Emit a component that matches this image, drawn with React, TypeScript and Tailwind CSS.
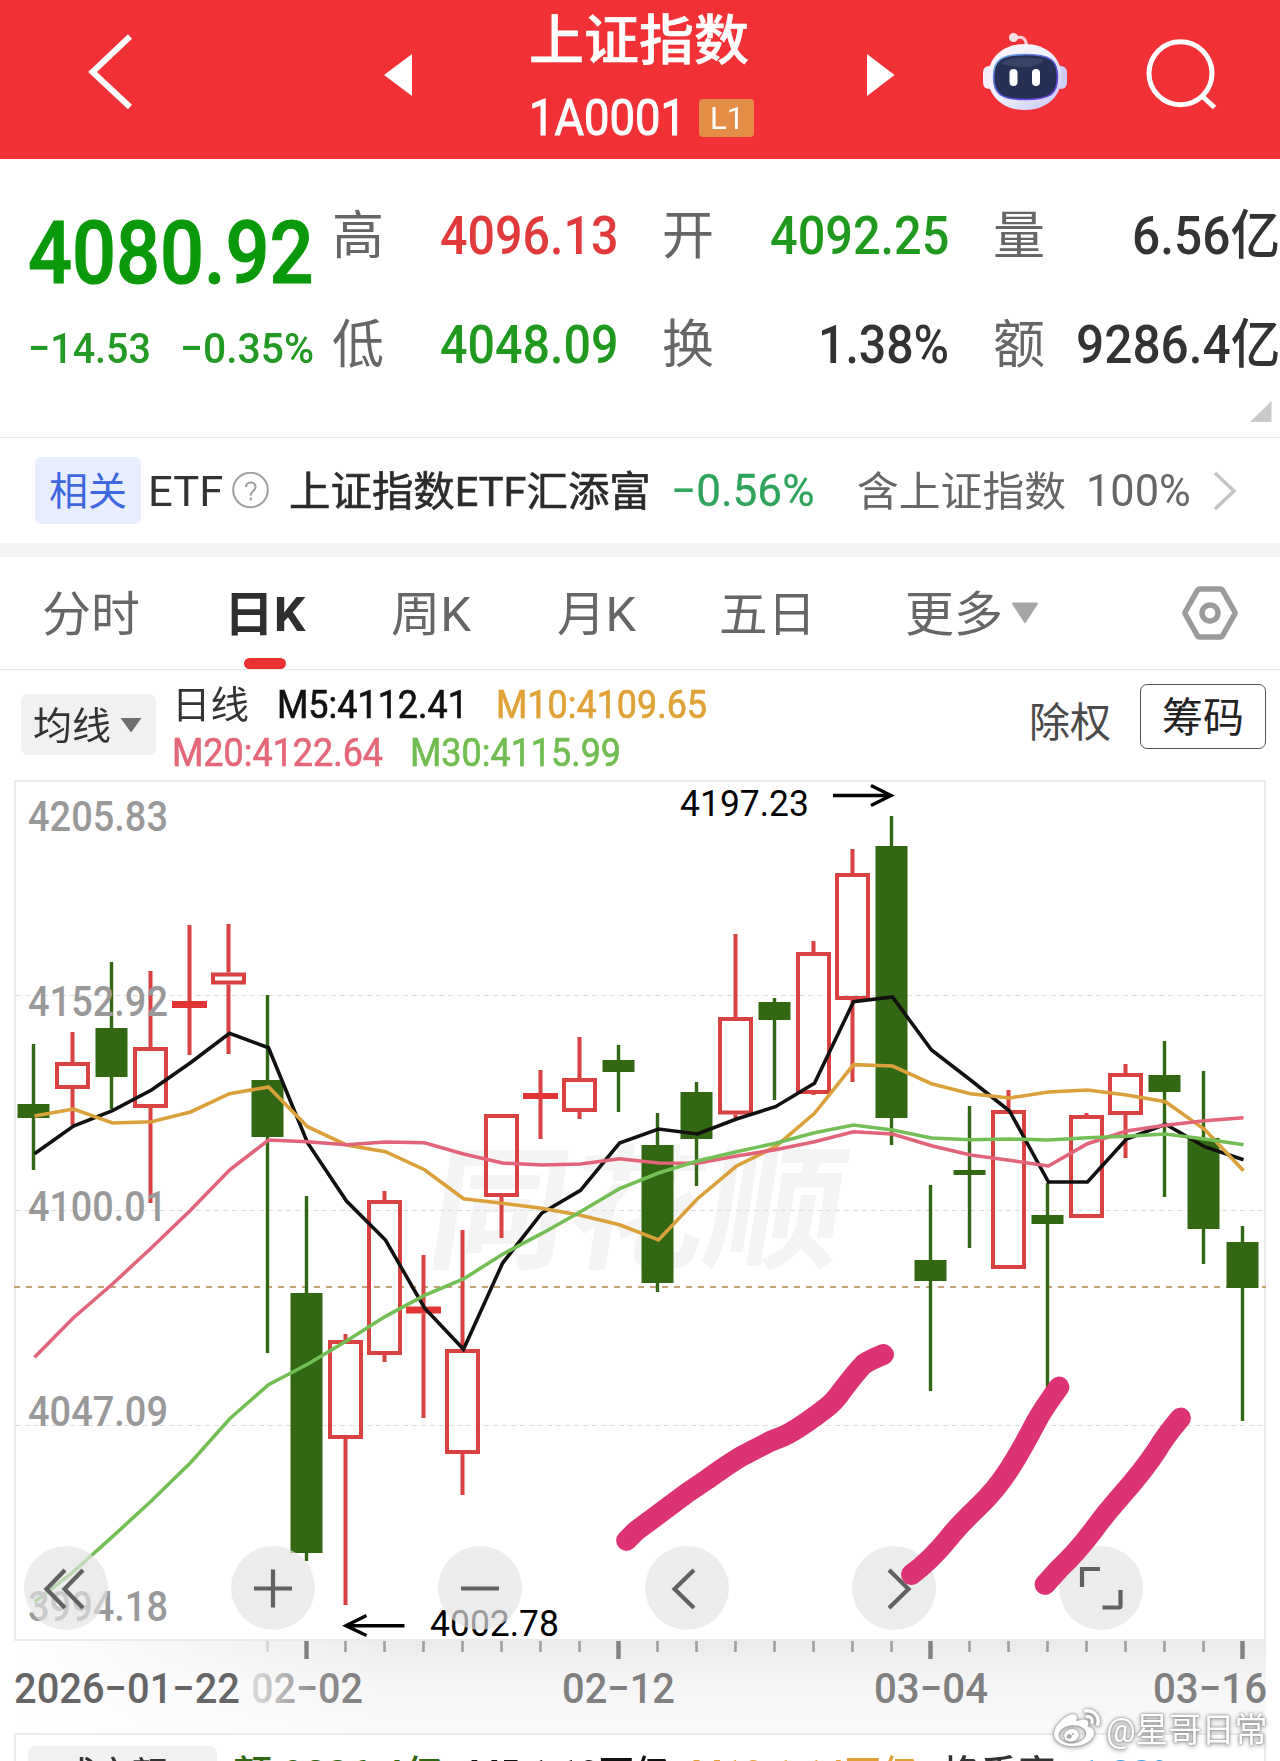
import { useLayoutEffect, useRef } from "react";
import type { ReactNode } from "react";
import { FaWeibo } from "react-icons/fa";

/** Single-line text whose glyphs are condensed or widened to fill the box set by its classes. */
function Fit({ className, children }: { className: string; children: ReactNode }) {
  const outer = useRef<HTMLSpanElement>(null);
  const inner = useRef<HTMLSpanElement>(null);
  useLayoutEffect(() => {
    const o = outer.current;
    const i = inner.current;
    if (!o || !i) return;
    i.style.transform = `scaleX(${o.clientWidth / i.offsetWidth})`;
  }, []);
  return (
    <span ref={outer} className={`block shrink-0 whitespace-nowrap ${className}`}>
      <span ref={inner} className="inline-block origin-left">
        {children}
      </span>
    </span>
  );
}

type Candle = { up: boolean; hi: number; top: number; bot: number; lo: number };
const c = (up: boolean, hi: number, top: number, bot: number, lo: number): Candle => ({ up, hi, top, bot, lo });

const candles: Candle[] = [
  c(false, 1044, 1104, 1118, 1170),
  c(true, 1032, 1062, 1089, 1125),
  c(false, 962, 1028, 1077, 1109),
  c(true, 971, 1047, 1108, 1203),
  c(true, 925, 1001, 1008, 1055),
  c(true, 924, 972.5, 984.5, 1054),
  c(false, 995, 1080, 1137, 1353),
  c(false, 1196, 1293, 1553, 1561),
  c(true, 1334, 1340, 1439, 1605),
  c(true, 1191, 1200, 1355, 1362),
  c(true, 1255, 1306.5, 1313.5, 1418),
  c(true, 1230, 1349, 1454, 1495),
  c(true, 1114, 1114, 1197, 1238),
  c(true, 1070, 1093, 1099, 1139),
  c(true, 1037, 1078, 1112, 1119),
  c(false, 1045, 1060, 1072, 1112),
  c(false, 1113, 1145, 1283, 1292),
  c(false, 1082, 1092, 1139, 1186),
  c(true, 934, 1017, 1114.5, 1118),
  c(false, 998, 1002, 1020, 1100),
  c(true, 941, 952, 1094, 1095),
  c(true, 849, 873, 1000, 1082),
  c(false, 816, 846, 1118, 1145),
  c(false, 1185, 1260, 1281, 1391),
  c(false, 1106, 1170, 1175, 1248),
  c(true, 1090, 1110, 1269, 1269),
  c(false, 1183, 1215, 1224, 1393),
  c(true, 1113, 1115, 1218, 1218),
  c(true, 1064, 1073, 1115, 1158),
  c(false, 1041, 1075, 1092, 1197),
  c(false, 1071, 1138, 1229, 1264),
  c(false, 1226, 1242, 1288, 1421),
];

const averages = [
  {
    color: "#111111",
    ys: [1153.7, 1126, 1110.7, 1090, 1062.7, 1033.3, 1047.7, 1142.7, 1201, 1240, 1308, 1349.3, 1263.3, 1213.3, 1190.3, 1143, 1129, 1134, 1119, 1106.7, 1083.3, 1001.7, 997, 1050, 1080, 1111, 1182, 1182, 1139, 1124.3, 1146.7, 1159.7],
  },
  {
    color: "#dba03a",
    ys: [1116, 1109, 1123, 1121.7, 1112, 1093.7, 1087, 1126.7, 1145, 1151.7, 1169.7, 1198.7, 1203.3, 1208.3, 1215.3, 1224.7, 1240, 1198.7, 1166, 1146.7, 1113.3, 1064.7, 1066, 1083.7, 1093.7, 1098, 1092, 1090, 1095, 1101.7, 1129.3, 1170.7],
  },
  {
    color: "#e2647a",
    ys: [1357.3, 1317.7, 1284, 1247.7, 1210.3, 1170, 1140, 1141.7, 1144.7, 1142, 1142.7, 1154, 1163, 1165, 1164, 1158.7, 1163, 1163.3, 1156, 1149.7, 1141.7, 1131.7, 1134, 1145.7, 1155, 1160.3, 1166, 1143.7, 1131, 1125.3, 1120.7, 1117.7],
  },
  {
    color: "#73bf55",
    ys: [1602, 1571.7, 1536.7, 1500.7, 1462.7, 1419, 1384.7, 1364.3, 1341, 1316.3, 1295.3, 1279, 1254.3, 1233.7, 1211.7, 1188.7, 1173, 1161, 1151.7, 1143.3, 1132.7, 1125, 1130, 1138, 1139.7, 1139, 1140, 1137.7, 1136.3, 1134, 1139, 1144.7],
  },
];

const xAt = (i: number) => 33.5 + 39 * i;

function CandleMark({ d, x }: { d: Candle; x: number }) {
  if (!d.up) {
    return (
      <g fill="#326714">
        <rect x={x - 1.7} y={d.hi} width={3.4} height={d.lo - d.hi} />
        <rect x={x - 16} y={d.top} width={32} height={d.bot - d.top} />
      </g>
    );
  }
  const flat = d.bot - d.top < 9;
  return (
    <g fill="#d84241">
      <rect x={x - 2} y={d.hi} width={4} height={d.top - d.hi} />
      <rect x={x - 2} y={d.bot} width={4} height={d.lo - d.bot} />
      {flat ? (
        <rect x={x - 17.5} y={d.top} width={35} height={d.bot - d.top} fill="#e03534" />
      ) : (
        <rect x={x - 15.5} y={d.top + 2} width={31} height={d.bot - d.top - 4} fill="none" stroke="#d84241" strokeWidth={4} />
      )}
    </g>
  );
}

const priceLabels = [
  { t: "4205.83", y: 831, w: 140 },
  { t: "4152.92", y: 1016, w: 140 },
  { t: "4100.01", y: 1221, w: 139 },
  { t: "4047.09", y: 1426, w: 140 },
  { t: "3994.18", y: 1621, w: 140 },
];

const dates = [
  { t: "2026−01−22", x: 14, w: 226, fill: "#666666" },
  { t: "02−02", x: 251, w: 112, fill: "url(#dateFade)" },
  { t: "02−12", x: 562, w: 113, fill: "#808080" },
  { t: "03−04", x: 874, w: 114, fill: "#808080" },
  { t: "03−16", x: 1153, w: 114, fill: "#808080" },
];

function Chart() {
  return (
    <svg className="block" width="1280" height="963" viewBox="0 770 1280 963" fontFamily="Roboto, 'Noto Sans CJK SC', sans-serif">
      <defs>
        <linearGradient id="axisShade" x1="0" y1="0" x2="0" y2="1">
          <stop offset="0" stopColor="#ebebeb" />
          <stop offset="0.5" stopColor="#f6f6f6" />
          <stop offset="1" stopColor="#fafafa" />
        </linearGradient>
        <linearGradient id="axisVeil" x1="0" y1="0" x2="1" y2="0">
          <stop offset="0" stopColor="#ffffff" />
          <stop offset="1" stopColor="#ffffff" stopOpacity="0" />
        </linearGradient>
        <linearGradient id="dateFade" x1="0" y1="0" x2="1" y2="0">
          <stop offset="0" stopColor="#dddddd" />
          <stop offset="0.55" stopColor="#909090" />
          <stop offset="1" stopColor="#808080" />
        </linearGradient>
      </defs>

      <text x="0" y="0" transform="translate(424 1258) skewX(-9)" fontSize="134" fontWeight="700" fill="#f4f4f4" textLength="414" lengthAdjust="spacingAndGlyphs">
        同花顺
      </text>

      <rect x="14" y="1641" width="1252" height="92" fill="url(#axisShade)" />
      <rect x="14" y="1641" width="390" height="92" fill="url(#axisVeil)" />

      <rect x="15" y="781" width="1250" height="859" fill="none" stroke="#eaeaea" strokeWidth="2" />
      {[995.5, 1210.5, 1425.5].map((y) => (
        <line key={y} x1="16" x2="1264" y1={y} y2={y} stroke="#dedede" strokeWidth="1.2" strokeDasharray="5 4" />
      ))}
      <line x1="14" x2="1266" y1="1287" y2="1287" stroke="#c2a477" strokeWidth="2" strokeDasharray="6 6" />

      {candles.map((d, i) => (
        <CandleMark key={i} d={d} x={xAt(i)} />
      ))}
      {averages.map((a) => (
        <polyline key={a.color} fill="none" stroke={a.color} strokeWidth="3.6" points={a.ys.map((y, i) => `${xAt(i) + 1},${y}`).join(" ")} />
      ))}

      {priceLabels.map((l) => (
        <text key={l.t} x="28" y={l.y} fontSize="42" fontWeight="500" fill="#999999" textLength={l.w} lengthAdjust="spacingAndGlyphs">
          {l.t}
        </text>
      ))}

      <g fontSize="36.5" fill="#000000">
        <text x="680" y="815.5" textLength="129" lengthAdjust="spacingAndGlyphs">4197.23</text>
        <text x="430" y="1635.5" textLength="129" lengthAdjust="spacingAndGlyphs">4002.78</text>
      </g>
      <g fill="none" stroke="#000000" strokeWidth="3.4">
        <path d="M833 795.5H890M871 785.5L891 795.5L871 805.5" />
        <path d="M404.5 1625.7H347M366.5 1615.5L346 1625.7L366.5 1635.5" />
      </g>

      {candles.map((_, i) => {
        if (i < 6) return null;
        const major = i % 8 === 7;
        return <rect key={i} x={xAt(i) - (major ? 2.2 : 1.3)} y="1641" width={major ? 4.4 : 2.6} height={major ? 18 : 11} fill={major ? "#808080" : i === 6 ? "#d4d4d4" : "#a0a0a0"} />;
      })}
      {dates.map((d) => (
        <text key={d.t} x={d.x} y="1703" fontSize="42" fontWeight="500" fill={d.fill} textLength={d.w} lengthAdjust="spacingAndGlyphs">
          {d.t}
        </text>
      ))}
    </svg>
  );
}

const controls = [
  "M41 24L22.500 43L41 62M59 24L40.500 43L59 62",
  "M23 42.500H61M42 23.500V61.500",
  "M23 42.500H61",
  "M49 24L29.500 43L49 62",
  "M37 24L56.500 43L37 62",
  "M23 41V23H41M61.500 44V60Q61.500 61.500 60 61.500H43.500",
];

function Controls() {
  return (
    <div className="absolute left-6 top-[776px] flex gap-[123px]">
      {controls.map((d) => (
        <button key={d} className="h-[84px] w-[84px] rounded-full bg-[#e3e3e3]/68">
          <svg width="84" height="84" viewBox="0 0 84 84" fill="none" stroke="#616161" strokeWidth="4.200">
            <path d={d} />
          </svg>
        </button>
      ))}
    </div>
  );
}

function Strokes() {
  return (
    <svg className="pointer-events-none absolute left-0 top-0" width="1280" height="963" viewBox="0 770 1280 963" fill="none" stroke="#dc3374" strokeWidth="20.800" strokeLinecap="round" strokeLinejoin="round">
      <path d="M626.500 1540.500L636 1531L687 1493L707 1479.500Q730 1463 742 1456L770 1441.500L785 1435.500Q800 1428 826 1408Q834 1402 841 1392Q856 1372 864 1364Q870 1360 883.500 1354.500" />
      <path d="M1059 1387Q1043 1409 1036 1422Q1022 1449 1010 1468Q996 1490 978 1507Q958 1526 948 1539Q930 1561 911.500 1574.500" />
      <path d="M1180.500 1418Q1166 1435 1157 1450Q1144 1470 1121 1496Q1105 1514 1092 1532Q1077 1552 1059 1569Q1050 1579 1045 1584.500" />
    </svg>
  );
}

function Header() {
  return (
    <header className="flex h-[159px] items-start bg-[#f23136] text-white">
      <svg className="ml-[84px] mt-7 shrink-0" width="54" height="90" viewBox="84 28 54 90" fill="none" stroke="#fff" strokeWidth="6">
        <path d="M130 36.500L92.500 72L130 107" />
      </svg>
      <svg className="ml-[245px] mt-[53px] shrink-0" width="29" height="44" viewBox="0 0 29 44" fill="#fff">
        <path d="M29 1V43L1 22Z" />
      </svg>
      <div className="ml-[117px] mt-[15px] w-[226px] shrink-0">
        <Fit className="w-[220px] text-[54px] leading-[54px] font-medium">
          <span className="[-webkit-text-stroke:0.600px_#fff]">上证指数</span>
        </Fit>
        <div className="mt-[29px] flex h-10 items-center">
          <Fit className="w-[157px] text-[50px] leading-10">
            <span className="[-webkit-text-stroke:1px_#fff]">1A0001</span>
          </Fit>
          <div className="ml-[13px] flex h-[38px] w-[55px] items-center justify-center rounded-[4px] bg-[#e38d47]">
            <Fit className="w-[34px] text-[32px] leading-[36px]">L1</Fit>
          </div>
        </div>
      </div>
      <svg className="ml-[112px] mt-[53px] shrink-0" width="29" height="44" viewBox="0 0 29 44" fill="#fff">
        <path d="M0 1V43L27.500 22Z" />
      </svg>
      <svg className="ml-[84px] mt-[30px] shrink-0" width="92" height="84" viewBox="980 30 92 84">
        <defs>
          <linearGradient id="shell" x1="0" y1="0" x2="1" y2="1">
            <stop offset="0" stopColor="#fff4f6" />
            <stop offset="0.5" stopColor="#eef0ff" />
            <stop offset="1" stopColor="#c3c2f6" />
          </linearGradient>
          <linearGradient id="rim" x1="0" y1="0" x2="1" y2="1">
            <stop offset="0" stopColor="#6bb6e8" />
            <stop offset="0.6" stopColor="#5a4fe0" />
            <stop offset="1" stopColor="#7a3fe6" />
          </linearGradient>
        </defs>
        <path d="M1014 39C1022 35 1026 38 1026.500 46" fill="none" stroke="#f7cfd9" strokeWidth="3" />
        <circle cx="1013.500" cy="37.500" r="4.500" fill="#f9dfe6" />
        <rect x="983" y="66" width="12" height="23" rx="6" fill="#f4ecfb" />
        <rect x="1055" y="66" width="12" height="23" rx="6" fill="#cfccf8" />
        <path d="M1024.700 44C1046 44 1061.500 57 1061.500 77C1061.500 97 1046 110 1024.700 110C1003.500 110 988 97 988 77C988 57 1003.500 44 1024.700 44Z" fill="url(#shell)" />
        <path d="M1025.500 54.500C1050 54.500 1057.500 60 1057.500 77C1057.500 94 1050 99.500 1025.500 99.500C1001 99.500 993.500 94 993.500 77C993.500 60 1001 54.500 1025.500 54.500Z" fill="#263054" stroke="url(#rim)" strokeWidth="1.600" />
        <path d="M1001 64Q1006 58 1022 57.500Q1040 58 1044 60Q1034 72 1001 64Z" fill="#4a5578" opacity="0.5" />
        <rect x="1009.500" y="69" width="8" height="17" rx="4" fill="#fff" />
        <rect x="1032" y="69" width="8" height="17" rx="4" fill="#fff" />
      </svg>
      <svg className="ml-[72px] mt-[34px] shrink-0" width="76" height="80" viewBox="1144 34 76 80" fill="none" stroke="#fff" strokeWidth="5">
        <ellipse cx="1180.500" cy="73.300" rx="31.500" ry="31.500" />
        <path d="M1202 96L1214.500 107.500" />
      </svg>
    </header>
  );
}

function Quote() {
  return (
    <section className="flex h-[279px] border-b border-[#e8e8e8]">
      <div className="ml-7 w-[286px] shrink-0 pt-[44px] text-[#0a990a]">
        <Fit className="w-[286px] text-[88px] leading-[100px] font-medium">
          <span className="[-webkit-text-stroke:1.200px_#0a990a]">4080.92</span>
        </Fit>
        <div className="mt-[20px] flex justify-between text-[43px] leading-[50px] font-medium text-[#239a23]">
          <Fit className="w-[123px]">−14.53</Fit>
          <Fit className="w-[134px]">−0.35%</Fit>
        </div>
      </div>
      <div className="ml-[18px] mt-[47px] grid h-[168px] grid-cols-[52px_234px_44px_52px_235px_44px_52px_235px] gap-y-12 text-[53px] leading-[60px] text-[#333]">
        <span className="pt-px text-[52px] text-[#666]">高</span>
        <Fit className="w-[178px] justify-self-end font-medium text-[#e03a3a]">4096.13</Fit>
        <i />
        <span className="pt-px text-[52px] text-[#666]">开</span>
        <Fit className="w-[179px] justify-self-end font-medium text-[#1f9a1f]">4092.25</Fit>
        <i />
        <span className="pt-px text-[52px] text-[#666]">量</span>
        <Fit className="w-[148px] justify-self-end font-medium">6.56亿</Fit>
        <span className="pt-px text-[52px] text-[#666]">低</span>
        <Fit className="w-[178px] justify-self-end font-medium text-[#1f9a1f]">4048.09</Fit>
        <i />
        <span className="pt-px text-[52px] text-[#666]">换</span>
        <Fit className="w-[131px] justify-self-end font-medium">1.38%</Fit>
        <i />
        <span className="pt-px text-[52px] text-[#666]">额</span>
        <Fit className="w-[204px] justify-self-end font-medium">9286.4亿</Fit>
      </div>
      <svg className="-ml-[30px] mt-[242px] shrink-0" width="22" height="21" viewBox="0 0 22 21">
        <path d="M21.500 0V21H0Z" fill="#c9c9c9" />
      </svg>
    </section>
  );
}

function Related() {
  return (
    <section className="flex h-[105px] items-center text-[#333]">
      <div className="ml-[35px] flex h-[67px] w-[106px] shrink-0 items-center justify-center rounded-[6px] bg-[#e9eefe]">
        <Fit className="w-[78px] pt-[2px] text-[39px] leading-[60px] text-[#3e68e0]">相关</Fit>
      </div>
      <Fit className="ml-[7px] w-[75px] pt-px text-[43px] leading-[60px]">ETF</Fit>
      <svg className="ml-[8px] shrink-0" width="38" height="38" viewBox="0 0 38 38" fill="none" stroke="#a0a0a0" strokeWidth="2">
        <circle cx="19.500" cy="18" r="17.300" />
        <path d="M15 15C15 9 24.500 9 24.500 15C24.500 19 19.700 19 19.700 23.500M19.700 25.500V28.500" strokeWidth="2.200" />
      </svg>
      <Fit className="ml-5 w-[362px] pt-[2px] text-[41px] leading-[60px] text-[#2b2b2b]">
        <span className="[-webkit-text-stroke:0.600px_#2b2b2b]">上证指数ETF汇添富</span>
      </Fit>
      <Fit className="ml-[20px] w-[143px] text-[45px] leading-[60px] text-[#2fa35a]">
        <span className="[-webkit-text-stroke:0.300px_#2fa35a]">−0.56%</span>
      </Fit>
      <Fit className="ml-[43px] w-[209px] pt-[2px] text-[41px] leading-[60px] text-[#666]">含上证指数</Fit>
      <Fit className="ml-5 w-[105px] text-[45px] leading-[60px] text-[#666]">100%</Fit>
      <svg className="ml-[21px] shrink-0" width="26" height="42" viewBox="0 0 26 42" fill="none" stroke="#c4c4c4" strokeWidth="3.500">
        <path d="M3 3L22 21L3 39" />
      </svg>
    </section>
  );
}

function Tabs() {
  return (
    <nav className="flex h-[113px] items-start border-b border-[#e4e4e4] text-[48px] leading-[116px] text-[#666]">
      <Fit className="ml-[42px] w-[98px]">分时</Fit>
      <div className="ml-[86px] flex w-[78px] shrink-0 flex-col items-center">
        <Fit className="h-[101px] w-[82px] font-bold text-[#2f2f2f]">日K</Fit>
        <span className="h-[11px] w-[42px] rounded-full bg-[#e83232]" />
      </div>
      <Fit className="ml-[87px] w-[80px]">周K</Fit>
      <Fit className="ml-[86px] w-[79px]">月K</Fit>
      <Fit className="ml-[83px] w-[97px]">五日</Fit>
      <Fit className="ml-[89px] w-[98px]">更多</Fit>
      <svg className="ml-[8px] mt-[45px] shrink-0" width="28" height="22" viewBox="0 0 28 22" fill="#a6a6a6" stroke="#a6a6a6" strokeWidth="2" strokeLinejoin="round">
        <path d="M2 1.500H26L14 20Z" />
      </svg>
      <svg className="ml-[141px] mt-[28px] shrink-0" width="60" height="56" viewBox="0 0 60 56" fill="none" stroke="#9b9b9b" strokeWidth="5.500" strokeLinejoin="round">
        <path d="M20 4H40Q42 4 43 6L54.500 26.500Q55.500 28 54.500 29.500L43 50Q42 52 40 52H20Q18 52 17 50L5.500 29.500Q4.500 28 5.500 26.500L17 6Q18 4 20 4Z" />
        <circle cx="30" cy="28" r="8" />
      </svg>
    </nav>
  );
}

function MaRow() {
  return (
    <section className="flex h-[100px] items-start">
      <div className="ml-[21px] mt-6 flex h-[61px] w-[135px] shrink-0 items-center rounded-[7px] bg-[#f1f1f1] pl-3">
        <Fit className="w-[78px] pt-[3px] text-[38px] leading-[61px] text-[#333]">均线</Fit>
        <svg className="ml-[9px] shrink-0" width="22" height="16" viewBox="0 0 22 16" fill="#6e6e6e">
          <path d="M0.500 1H21.500L11 15.500Z" />
        </svg>
      </div>
      <div className="ml-4 w-[540px] shrink-0 pt-[11px] text-[39.5px]">
        <div className="flex h-12 items-center leading-[40px]">
          <Fit className="w-[77px] text-[38px] text-[#333]">日线</Fit>
          <Fit className="ml-[28px] w-[191px] text-[#111]">
            <span className="[-webkit-text-stroke:0.700px_#111]">M5:4112.41</span>
          </Fit>
          <Fit className="ml-[28px] w-[211px] text-[#e0a236]">
            <span className="[-webkit-text-stroke:0.700px_#e0a236]">M10:4109.65</span>
          </Fit>
        </div>
        <div className="flex h-12 items-center leading-[40px]">
          <Fit className="w-[211px] text-[#e4677a]">
            <span className="[-webkit-text-stroke:0.700px_#e4677a]">M20:4122.64</span>
          </Fit>
          <Fit className="ml-[27px] w-[211px] text-[#70be52]">
            <span className="[-webkit-text-stroke:0.700px_#70be52]">M30:4115.99</span>
          </Fit>
        </div>
      </div>
      <Fit className="ml-[317px] mt-[21px] w-[82px] text-[41px] leading-[64px] text-[#4a4a4a]">除权</Fit>
      <div className="ml-[29px] mt-[14px] flex h-[65px] w-[126px] shrink-0 items-center justify-center rounded-[7px] border-[1.5px] border-[#555]">
        <Fit className="w-[82px] pt-[3px] text-[41px] leading-[60px] text-[#222]">筹码</Fit>
      </div>
    </section>
  );
}

function TurnoverPanel() {
  return (
    <section className="ml-[14px] mr-[14px] flex h-7 items-start overflow-hidden border-x-2 border-t-2 border-[#eaeaea] bg-white text-[39px] leading-[60px] font-medium">
      <div className="ml-3 mt-[11px] flex h-[60px] w-[189px] shrink-0 items-center rounded-[7px] bg-[#f1f1f1] pl-[33px]">
        <Fit className="w-[106px] text-[36px] text-[#333]">成交额</Fit>
      </div>
      <Fit className="ml-4 mt-[10px] w-[210px] text-[#326714]">额:9286.4亿</Fit>
      <Fit className="ml-[26px] mt-[10px] w-[200px] text-[#111]">M5:1.10万亿</Fit>
      <Fit className="ml-[22px] mt-[10px] w-[226px] text-[#e0a236]">M10:1.14万亿</Fit>
      <Fit className="ml-[26px] mt-[10px] w-[122px] text-[#333]">换手率:</Fit>
      <Fit className="ml-[14px] mt-[10px] w-[100px] text-[#3fa0e0]">1.38%</Fit>
    </section>
  );
}

export default function App() {
  return (
    <main className="relative h-[1761px] w-[1280px] overflow-hidden bg-white font-['Roboto','Noto_Sans_CJK_SC',sans-serif]">
      <Header />
      <Quote />
      <Related />
      <div className="h-[14px] bg-[#f4f4f4]" />
      <Tabs />
      <MaRow />
      <section className="relative h-[963px]">
        <Chart />
        <Controls />
        <Strokes />
      </section>
      <TurnoverPanel />
      <div className="absolute bottom-[9px] right-[12px] flex items-center gap-[6px] text-white [filter:drop-shadow(0_0_1px_#888)_drop-shadow(0_1px_2px_#999)]">
        <FaWeibo className="h-[46px] w-[46px]" />
        <Fit className="w-[162px] pt-[2px] text-[34px] leading-[40px]">@星哥日常</Fit>
      </div>
    </main>
  );
}
